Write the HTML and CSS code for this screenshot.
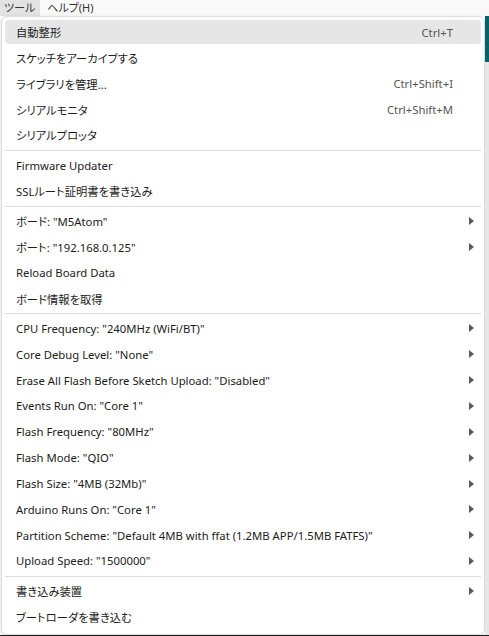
FILE: index.html
```html
<!DOCTYPE html>
<html lang="ja">
<head>
  <meta charset="UTF-8" />
  <title>ツール</title>
  <link rel="stylesheet" href="styles.css">
</head>
<body>
  <div class="menubar">
    <span class="top-item active">ツール</span>
    <span class="top-item">ヘルプ(H)</span>
  </div>
  <div class="workspace">
    <div class="menu">
      <div class="item hover"><span>自動整形</span><span class="key">Ctrl+T</span></div>
      <div class="item"><span>スケッチをアーカイブする</span></div>
      <div class="item"><span>ライブラリを管理...</span><span class="key">Ctrl+Shift+I</span></div>
      <div class="item"><span>シリアルモニタ</span><span class="key">Ctrl+Shift+M</span></div>
      <div class="item"><span>シリアルプロッタ</span></div>
      <div class="sep"></div>
      <div class="item"><span>Firmware Updater</span></div>
      <div class="item"><span>SSLルート証明書を書き込み</span></div>
      <div class="sep"></div>
      <div class="item sub"><span>ボード: "M5Atom"</span></div>
      <div class="item sub"><span>ポート: "192.168.0.125"</span></div>
      <div class="item"><span>Reload Board Data</span></div>
      <div class="item"><span>ボード情報を取得</span></div>
      <div class="sep"></div>
      <div class="item sub"><span>CPU Frequency: "240MHz (WiFi/BT)"</span></div>
      <div class="item sub"><span>Core Debug Level: "None"</span></div>
      <div class="item sub"><span>Erase All Flash Before Sketch Upload: "Disabled"</span></div>
      <div class="item sub"><span>Events Run On: "Core 1"</span></div>
      <div class="item sub"><span>Flash Frequency: "80MHz"</span></div>
      <div class="item sub"><span>Flash Mode: "QIO"</span></div>
      <div class="item sub"><span>Flash Size: "4MB (32Mb)"</span></div>
      <div class="item sub"><span>Arduino Runs On: "Core 1"</span></div>
      <div class="item sub"><span>Partition Scheme: "Default 4MB with ffat (1.2MB APP/1.5MB FATFS)"</span></div>
      <div class="item sub"><span>Upload Speed: "1500000"</span></div>
      <div class="sep"></div>
      <div class="item sub"><span>書き込み装置</span></div>
      <div class="item"><span>ブートローダを書き込む</span></div>
    </div>
    <div class="edge">
      <div class="edge-top"></div>
    </div>
  </div>
  <div class="statusbar"></div>
</body>
</html>
```

FILE: styles.css
```css
body {
  margin: 0;
  width: 489px;
  height: 636px;
  overflow: hidden;
  background: #ffffff;
  font-family: "Noto Sans", "Noto Sans CJK JP", sans-serif;
  font-size: 11.3px;
  font-feature-settings: "palt";
  color: #1b1b1b;
  display: flex;
  flex-direction: column;
}
.menubar {
  height: 16px;
  display: flex;
  align-items: center;
  background: #f9f9f9;
  color: #333333;
  font-size: 11px;
}
.top-item {
  height: 16px;
  line-height: 16px;
  padding: 0 4px;
}
.top-item.active {
  background: #e3e3e3;
  padding-right: 5px;
  margin-right: 3px;
}
.workspace {
  flex: 1;
  display: flex;
}
.menu {
  width: 482px;
  margin-left: 1px;
  padding: 2px 0 4px;
  background: #ffffff;
  border: 1px solid #dcdcdc;
  border-radius: 6px;
  box-shadow: 0 2px 6px rgba(0, 0, 0, 0.12);
}
.item {
  height: 25.85px;
  margin: 0 3px;
  padding: 0 28px 0 11px;
  display: flex;
  align-items: center;
  justify-content: space-between;
  border-radius: 4px;
  white-space: nowrap;
  position: relative;
}
.item.hover {
  background: #e6e6e6;
  height: 24px;
  margin-top: 1px;
  margin-bottom: 1px;
}
.key {
  color: #555555;
}
.sub::after {
  content: "";
  position: absolute;
  right: 7px;
  top: 9px;
  border-left: 5px solid #5a5a5a;
  border-top: 4px solid transparent;
  border-bottom: 4px solid transparent;
}
.sep {
  height: 1px;
  margin: 2px 3px 1px;
  background: #dcdcdc;
}
.edge {
  flex: 1;
  background: #e6e6e6;
}
.edge-top {
  height: 46px;
  background: #006468;
}
.statusbar {
  height: 4px;
  background: #1f1f1f;
}
```
